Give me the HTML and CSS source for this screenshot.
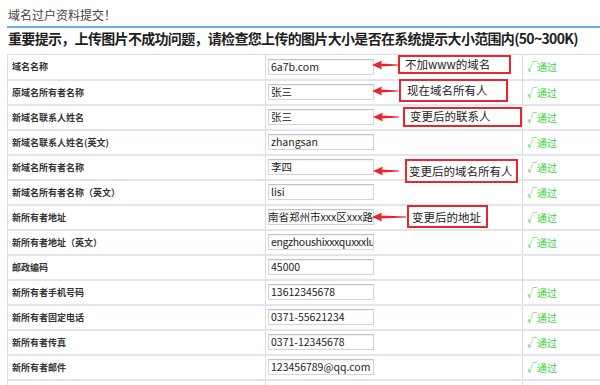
FILE: index.html
```html
<!DOCTYPE html>
<html lang="zh-CN">
<head>
<meta charset="utf-8">
<title>域名过户资料提交</title>
<link rel="stylesheet" href="styles.css">
</head>
<body>
<div class="page">
  <div class="title">域名过户资料提交！</div>
  <div class="notice">重要提示，上传图片不成功问题，请检查您上传的图片大小是否在系统提示大小范围内(50~300K)</div>
  <div class="form-wrap">
    <table class="form">
      <colgroup><col class="c-label"><col class="c-field"><col class="c-status"></colgroup>
      <tr><td class="label">域名名称</td><td><div class="field">6a7b.com</div></td><td class="ok">√通过</td></tr>
      <tr><td class="label">原域名所有者名称</td><td><div class="field">张三</div></td><td class="ok">√通过</td></tr>
      <tr><td class="label">新域名联系人姓名</td><td><div class="field">张三</div></td><td class="ok">√通过</td></tr>
      <tr><td class="label">新域名联系人姓名(英文)</td><td><div class="field">zhangsan</div></td><td class="ok">√通过</td></tr>
      <tr><td class="label">新域名所有者名称</td><td><div class="field">李四</div></td><td class="ok">√通过</td></tr>
      <tr><td class="label">新域名所有者名称（英文）</td><td><div class="field">lisi</div></td><td class="ok">√通过</td></tr>
      <tr><td class="label">新所有者地址</td><td><div class="field field-end"><span>河南省郑州市xxx区xxx路</span></div></td><td class="ok">√通过</td></tr>
      <tr><td class="label">新所有者地址（英文）</td><td><div class="field field-tight">engzhoushixxxquxxxlu</div></td><td class="ok">√通过</td></tr>
      <tr><td class="label">邮政编码</td><td><div class="field">45000</div></td><td></td></tr>
      <tr><td class="label">新所有者手机号码</td><td><div class="field">13612345678</div></td><td class="ok">√通过</td></tr>
      <tr><td class="label">新所有者固定电话</td><td><div class="field">0371-55621234</div></td><td class="ok">√通过</td></tr>
      <tr><td class="label">新所有者传真</td><td><div class="field">0371-12345678</div></td><td class="ok">√通过</td></tr>
      <tr><td class="label">新所有者邮件</td><td><div class="field">123456789@qq.com</div></td><td class="ok">√通过</td></tr>
      <tr><td class="label"></td><td></td><td></td></tr>
    </table>

    <div class="note n1"><svg class="arrow" viewBox="0 0 26 10" width="26" height="10"><polygon points="0,5 10,0.5 9,3.6 26,4.6 26,5.4 9,6.4 10,9.5"/></svg><span class="box">不加www的域名</span></div>
    <div class="note n2"><svg class="arrow" viewBox="0 0 26 10" width="26" height="10"><polygon points="0,5 10,0.5 9,3.6 26,4.6 26,5.4 9,6.4 10,9.5"/></svg><span class="box">现在域名所有人</span></div>
    <div class="note n3"><svg class="arrow" viewBox="0 0 26 10" width="26" height="10"><polygon points="0,5 10,0.5 9,3.6 26,4.6 26,5.4 9,6.4 10,9.5"/></svg><span class="box">变更后的联系人</span></div>
    <div class="note n4"><svg class="arrow" viewBox="0 0 26 10" width="26" height="10"><polygon points="0,5 10,0.5 9,3.6 26,4.6 26,5.4 9,6.4 10,9.5"/></svg><span class="box">变更后的域名所有人</span></div>
    <div class="note n5"><svg class="arrow long" viewBox="0 0 34 10" width="34" height="10"><polygon points="0,5 10,0.5 9,3.6 34,4.6 34,5.4 9,6.4 10,9.5"/></svg><span class="box">变更后的地址</span></div>
  </div>
</div>
</body>
</html>
```

FILE: styles.css
```css
* { box-sizing: border-box; }
html, body {
  margin: 0;
  padding: 0;
  background: #fff;
}
body {
  font-family: "Noto Sans CJK SC", "Open Sans", sans-serif;
  color: #333;
  width: 600px;
  height: 385px;
  overflow: hidden;
}
.page {
  padding-left: 7px;
}
.title {
  height: 28px;
  padding: 6px 0 0 1px;
  font-size: 12px;
  line-height: 17px;
  color: #444;
  border-bottom: 2px solid #62b1e6;
}
.notice {
  height: 20px;
  line-height: 20px;
  padding-left: 1px;
  font-size: 14px;
  font-weight: bold;
  color: #1e1e1e;
  white-space: nowrap;
  letter-spacing: -0.68px;
  margin-bottom: 6px;
}
.form-wrap {
  position: relative;
}
.form {
  border-collapse: collapse;
  width: 640px;
  table-layout: fixed;
}
.c-label { width: 258px; }
.c-field { width: 257px; }
.c-status { width: 125px; }
.form td {
  height: 25px;
  padding: 0;
  border: 1px solid #d9dde2;
  border-bottom: 2px solid #e2e5e9;
  vertical-align: middle;
}
.form tr:first-child td {
  border-top: 1px solid #d9dde2;
}
.label {
  padding-left: 4px !important;
  font-size: 9px;
  font-weight: bold;
  color: #333;
}
.form td:nth-child(2) {
  padding-left: 2px;
}
.field {
  width: 106px;
  height: 16px;
  border: 1px solid #d4d4d4;
  border-top-color: #c2c2c2;
  box-shadow: inset 0 1px 1px rgba(0,0,0,0.06);
  background: #fff;
  font-size: 10.5px;
  line-height: 14px;
  padding-left: 2px;
  color: #222;
  white-space: nowrap;
  overflow: hidden;
}
.field-tight {
  letter-spacing: -0.3px;
}
.field-end {
  display: flex;
  justify-content: flex-end;
  padding-left: 0;
}
.field-end span { flex: none; }
.ok {
  padding-left: 4px !important;
  font-size: 10px;
  color: #37d437;
}
.note {
  position: absolute;
  display: flex;
  align-items: center;
}
.arrow {
  fill: #e8262e;
  flex: none;
}
.box {
  display: block;
  border: 2px solid #e8262e;
  background: #fff;
  font-size: 11.5px;
  line-height: 15px;
  color: #222;
  white-space: nowrap;
  padding-left: 5px;
}
.n1 { left: 365px; top: 1px; }
.n1 .box { width: 113px; height: 19px; }
.n2 { left: 365px; top: 25px; }
.n2 .box { width: 109px; height: 23px; margin-left: 1px; padding-top: 2px; padding-left: 6px; }
.n3 { left: 366px; top: 53px; }
.n3 .box { width: 119px; height: 20px; margin-left: 4px; }
.n4 { left: 366px; top: 105px; }
.n4 .box { width: 113px; height: 24px; margin-left: 6px; padding-top: 3px; padding-left: 2px; }
.n5 { left: 365px; top: 151px; }
.n5 .box { width: 81px; height: 23px; margin-left: 1px; padding-top: 3px; padding-left: 3px; }
```
